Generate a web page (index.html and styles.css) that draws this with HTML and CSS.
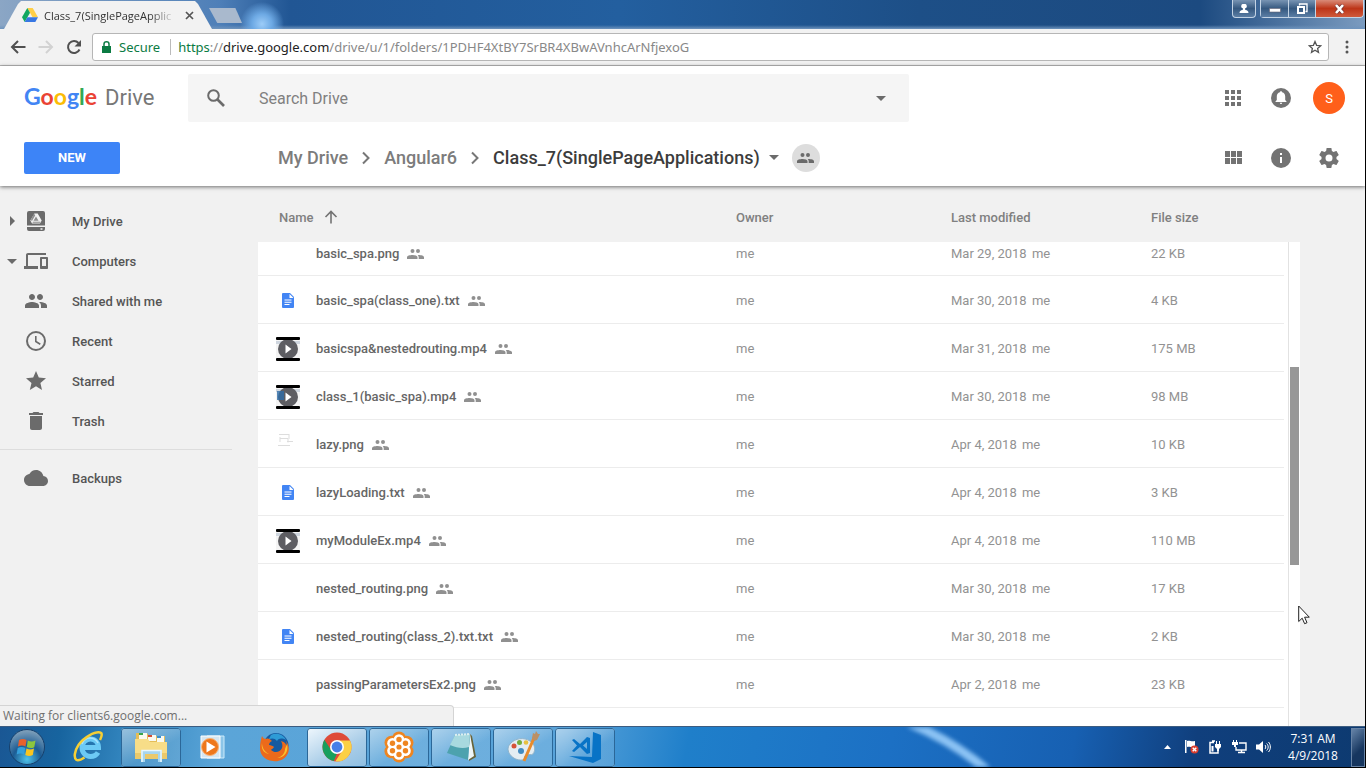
FILE: index.html
```html
<!DOCTYPE html>
<html lang="en">
<head>
<meta charset="utf-8">
<title>Class_7(SinglePageApplications) - Google Drive</title>
<link rel="stylesheet" href="styles.css">
</head>
<body>
<svg class="defs" aria-hidden="true">
  <symbol id="people" viewBox="0 0 24 24"><path d="M16 11c1.66 0 2.99-1.34 2.99-3S17.66 5 16 5s-3 1.34-3 3 1.34 3 3 3zm-8 0c1.66 0 2.99-1.34 2.99-3S9.66 5 8 5 5 6.34 5 8s1.34 3 3 3zm0 2c-2.33 0-7 1.17-7 3.5V19h14v-2.500c0-2.330-4.670-3.500-7-3.500zm8 0c-.29 0-.62.02-.97.05 1.160.840 1.970 1.970 1.970 3.450V19h6v-2.500c0-2.330-4.670-3.500-7-3.500z"/></symbol>
  <symbol id="people-small" viewBox="0 0 17 12"><path d="M5.500 1a2 2 0 1 1 0 4 2 2 0 0 1 0-4zM11 1a2 2 0 1 1 0 4 2 2 0 0 1 0-4zM0 11V9.300C0 7.700 3 7 5.500 7s5 .7 5 2.300V11zM11.700 11V9.300c0-.9-.4-1.600-1-2.200 2.600-.2 6.300.5 6.300 2.200V11z"/></symbol>
  <symbol id="doc" viewBox="0 0 12 15"><path fill="#4285f4" d="M1 0h7l4 4v10a1 1 0 0 1-1 1H1a1 1 0 0 1-1-1V1a1 1 0 0 1 1-1z"/><path fill="#fff" d="M7.500 1v4h4zM2.500 6.500h7v1h-7zM2.500 8.700h7v1h-7zM2.500 11h5v1h-5z"/></symbol>
  <symbol id="video" viewBox="0 0 24 24"><path fill="#f4f4f4" d="M0 0h24v24H0z"/><path fill="#cfd6df" d="M0 4h24v3H0z"/><circle cx="12" cy="12" r="10" fill="#5d5d62"/><rect width="24" height="3" rx="1"/><rect y="21" width="24" height="3" rx="1"/><path fill="#fff" d="M9.500 7.500v9l6-4.500z"/></symbol>
  <symbol id="crumb" viewBox="0 0 10 14"><path fill="none" stroke="#777" stroke-width="2" d="M2 1.500 7.500 7 2 12.500"/></symbol>
</svg>

<header class="titlebar">
  <div class="tab">
    <svg width="16" height="14" viewBox="0 0 16 14"><path fill="#ffcf48" d="M5.300 0h5.400L16 9.300h-5.400z"/><path fill="#11a861" d="M5.300 0 8 4.700 2.700 14 0 9.300z"/><path fill="#3777e3" d="M5.400 9.300H16L13.300 14H2.700z"/></svg>
    <span class="tab-title">Class_7(SinglePageApplic</span>
    <button class="tab-close" aria-label="Close tab"><svg width="9" height="9" viewBox="0 0 9 9"><path stroke="#555" stroke-width="1.700" d="m1 1 7 7M8 1 1 8"/></svg></button>
  </div>
  <button class="new-tab" aria-label="New tab"></button>
  <div class="window-controls">
    <button class="win-button profile" aria-label="Profile"><svg width="10" height="10" viewBox="0 0 10 10"><path fill="#fff" d="M5 0a2.300 2.300 0 0 1 1 4.500l.3 1.500C8.500 6.400 9.500 7 9.500 9h-9c0-2 1-2.600 3.200-3L4 4.500A2.300 2.300 0 0 1 5 0z"/></svg></button>
    <div class="win-group">
      <button class="win-button minimize" aria-label="Minimize"><svg width="12" height="5" viewBox="0 0 12 5"><path fill="#fff" stroke="#667" stroke-width=".6" d="M.5.500h11v3.500H.5z"/></svg></button>
      <button class="win-button restore" aria-label="Restore"><svg width="12" height="12" viewBox="0 0 12 12"><path fill="none" stroke="#fff" stroke-width="1.300" d="M3.500 2.500V1H11v7.500H9.500"/><path fill="none" stroke="#fff" stroke-width="2" d="M2 4h6v6H2z"/></svg></button>
      <button class="win-button close" aria-label="Close"><svg width="11" height="10" viewBox="0 0 11 10"><path stroke="#733" stroke-width="4" d="m2 1 7 8M9 1 2 9"/><path stroke="#fff" stroke-width="2.600" d="m2 1 7 8M9 1 2 9"/></svg></button>
    </div>
  </div>
</header>

<nav class="toolbar">
  <button class="nav-button" aria-label="Back"><svg width="16" height="14" viewBox="0 0 16 14"><path fill="none" stroke="#505050" stroke-width="2" d="M15.500 7H2M8 1 2 7l6 6"/></svg></button>
  <button class="nav-button" aria-label="Forward"><svg width="16" height="14" viewBox="0 0 16 14"><path fill="none" stroke="#d2d2d2" stroke-width="2" d="M.5 7H14M8 1l6 6-6 6"/></svg></button>
  <button class="nav-button" aria-label="Reload"><svg width="16" height="16" viewBox="0 0 16 16"><path fill="none" stroke="#505050" stroke-width="2" d="M13.500 10.500A6 6 0 1 1 12.500 4"/><path fill="#505050" d="M15 1v6.500H8.500z"/></svg></button>
  <div class="omnibox">
    <svg width="9" height="12" viewBox="0 0 9 12"><path fill="#0b7b43" d="M0 5h9v7H0z"/><path fill="none" stroke="#0b7b43" stroke-width="1.500" d="M2 5.500V3a2.500 2.200 0 0 1 5 0v2.500"/></svg>
    <span class="secure">Secure</span>
    <span class="url"><span class="scheme">https</span>://<span class="host">drive.google.com</span>/drive/u/1/folders/1PDHF4XtBY7SrBR4XBwAVnhcArNfjexoG</span>
    <button class="star" aria-label="Bookmark"><svg width="14" height="14" viewBox="0 0 14 14"><path fill="none" stroke="#555" stroke-width="1.300" d="m7 1.500 1.600 3.800 4.100.4-3.100 2.700.9 4L7 10.300 3.500 12.400l.9-4L1.300 5.700l4.100-.4z"/></svg></button>
  </div>
  <button class="menu" aria-label="Menu"><svg width="4" height="14" viewBox="0 0 4 14" fill="#555"><circle cx="2" cy="2" r="1.500"/><circle cx="2" cy="7" r="1.500"/><circle cx="2" cy="12" r="1.500"/></svg></button>
</nav>

<header class="drive-header">
  <div class="header-row">
    <a class="logo" href="#" aria-label="Google Drive"><span class="google"><span class="blue">G</span><span class="red">o</span><span class="yellow">o</span><span class="blue">g</span><span class="green">l</span><span class="red">e</span></span><span class="product">Drive</span></a>
    <form class="search">
      <svg width="18" height="18" viewBox="0 0 18 18"><circle cx="6.500" cy="6.500" r="5.300" fill="none" stroke="#6b6b6b" stroke-width="2"/><path stroke="#6b6b6b" stroke-width="2.600" d="m10.500 10.500 6.500 6.500"/></svg>
      <input type="text" placeholder="Search Drive" aria-label="Search Drive">
      <button type="button" class="caret-button" aria-label="Search options"><span class="caret"></span></button>
    </form>
    <div class="actions">
      <button aria-label="Google apps"><svg width="16" height="16" viewBox="0 0 16 16" fill="#737373"><path d="M0 0h4v4H0zM6 0h4v4H6zM12 0h4v4h-4zM0 6h4v4H0zM6 6h4v4H6zM12 6h4v4h-4zM0 12h4v4H0zM6 12h4v4H6zM12 12h4v4h-4z"/></svg></button>
      <button aria-label="Notifications"><svg width="20" height="20" viewBox="0 0 20 20"><circle cx="10" cy="10" r="10" fill="#737373"/><path fill="#fff" d="M10 3.200c.7 0 1.100.4 1.100 1.100 2 .5 3.100 2.100 3.100 4.200v3.600l1.300 1.300v.700h-11v-.7l1.300-1.300V8.500c0-2.100 1.100-3.700 3.100-4.200 0-.7.400-1.100 1.100-1.100zM8.800 14.800h2.400a1.200 1.200 0 0 1-2.400 0z"/></svg></button>
      <button class="avatar" aria-label="Account">S</button>
    </div>
  </div>
  <div class="header-row">
    <button class="new">NEW</button>
    <nav class="breadcrumbs">
      <a href="#">My Drive</a>
      <svg width="10" height="14"><use href="#crumb"/></svg>
      <a href="#">Angular6</a>
      <svg width="10" height="14"><use href="#crumb"/></svg>
      <a class="current" href="#">Class_7(SinglePageApplications)<span class="caret"></span></a>
      <button class="shared-badge" aria-label="Shared"><svg width="17" height="12" fill="#6b6b6b"><use href="#people-small"/></svg></button>
    </nav>
    <div class="actions">
      <button aria-label="Grid view"><svg width="17" height="13" viewBox="0 0 17 13" fill="#737373"><path d="M0 0h5v6H0zM6 0h5v6H6zM12 0h5v6h-5zM0 7h5v6H0zM6 7h5v6H6zM12 7h5v6h-5z"/></svg></button>
      <button aria-label="Details"><svg width="20" height="20" viewBox="0 0 20 20"><circle cx="10" cy="10" r="10" fill="#737373"/><path fill="#fff" d="M9 5h2v2H9zM9 9h2v6H9z"/></svg></button>
      <button aria-label="Settings"><svg width="24" height="24" viewBox="0 0 24 24" fill="#737373"><path d="M19.430 12.980c.04-.32.07-.64.07-.98s-.03-.66-.07-.98l2.110-1.650c.19-.15.24-.42.12-.64l-2-3.460c-.12-.22-.39-.3-.61-.22l-2.490 1c-.52-.4-1.080-.73-1.690-.98l-.38-2.650C14.460 2.180 14.250 2 14 2h-4c-.25 0-.46.18-.49.42l-.38 2.650c-.61.25-1.170.59-1.690.98l-2.490-1c-.23-.09-.49 0-.61.22l-2 3.460c-.13.22-.07.49.12.64l2.110 1.650c-.04.32-.07.65-.07.98s.03.66.07.98l-2.110 1.650c-.19.15-.24.42-.12.64l2 3.460c.12.22.39.3.61.22l2.490-1c.52.4 1.080.73 1.690.98l.38 2.650c.03.24.24.42.49.42h4c.25 0 .46-.18.49-.42l.38-2.650c.61-.25 1.170-.59 1.690-.98l2.490 1c.23.09.49 0 .61-.22l2-3.460c.12-.22.07-.49-.12-.64l-2.110-1.650zM12 15.500a3.500 3.500 0 1 1 0-7 3.500 3.500 0 0 1 0 7z"/></svg></button>
    </div>
  </div>
</header>

<main class="content">
  <nav class="sidebar">
    <a href="#"><span class="expander right"></span><svg width="24" height="24" viewBox="0 0 24 24"><path d="M5 2h14a2 2 0 0 1 2 2v12.500H3V4a2 2 0 0 1 2-2zM3 18h18v2a2 2 0 0 1-2 2H5a2 2 0 0 1-2-2z"/><path fill="#f1f1f1" d="M10.300 4.500h3.400l4 7-1.700 3H8l-1.700-3zM16.500 19.300h2v1.400h-2z"/><path d="m12 7.500-2.500 4.300h5zM10 4.500l1.200 2-3.400 5.800-.8-1.500zM9 12.800h7.500l-.6 1H8.500z" opacity=".75"/></svg>My Drive</a>
    <a href="#"><span class="expander down"></span><svg width="24" height="24" viewBox="0 0 24 24"><path d="M4 6h18V4H4c-1.100 0-2 .9-2 2v11H0v3h14v-3H4V6zm19 2h-6c-.55 0-1 .45-1 1v10c0 .55.45 1 1 1h6c.55 0 1-.45 1-1V9c0-.55-.45-1-1-1zm-1 9h-4v-7h4v7z"/></svg>Computers</a>
    <a href="#"><span class="expander"></span><svg width="24" height="24"><use href="#people"/></svg>Shared with me</a>
    <a href="#"><span class="expander"></span><svg width="24" height="24" viewBox="0 0 24 24"><circle cx="12" cy="12" r="9" fill="none" stroke="#6b6b6b" stroke-width="2"/><path fill="none" stroke="#6b6b6b" stroke-width="1.600" d="M11.800 7v5.500l4.500 2.700"/></svg>Recent</a>
    <a href="#"><span class="expander"></span><svg width="24" height="24" viewBox="0 0 24 24"><path d="m12 17.300 6 3.700-1.600-7L22 9.200l-7.200-.6L12 2 9.200 8.600 2 9.200 7.500 14 5.800 21z"/></svg>Starred</a>
    <a href="#"><span class="expander"></span><svg width="24" height="24" viewBox="0 0 24 24"><path d="M6 19c0 1.100.9 2 2 2h8c1.100 0 2-.9 2-2V7H6v12zM19 4h-3.500l-1-1h-5l-1 1H5v2h14V4z"/></svg>Trash</a>
    <hr>
    <a href="#"><span class="expander"></span><svg width="24" height="24" viewBox="0 0 24 24"><path d="M19.350 10.040C18.670 6.590 15.640 4 12 4 9.110 4 6.600 5.640 5.350 8.040 2.340 8.360 0 10.910 0 14c0 3.310 2.690 6 6 6h13c2.760 0 5-2.240 5-5 0-2.640-2.050-4.780-4.650-4.960z"/></svg>Backups</a>
  </nav>

  <section class="list">
    <table>
      <colgroup><col><col class="col-owner"><col class="col-modified"><col class="col-size"></colgroup>
      <thead>
        <tr><th class="name-head"><span>Name<svg width="14" height="14" viewBox="0 0 14 14"><path fill="none" stroke="#737373" stroke-width="1.600" d="M7 13.500V2M1.500 7 7 1.500 12.500 7"/></svg></span></th><th>Owner</th><th>Last modified</th><th>File size</th></tr>
      </thead>
      <tbody>
        <tr class="partial"><td><div class="file"><span class="thumb"></span>basic_spa.png<svg class="shared"><use href="#people-small"/></svg></div></td><td>me</td><td>Mar 29, 2018 <span class="by">me</span></td><td>22 KB</td></tr>
        <tr><td><div class="file"><span class="thumb"><svg width="12" height="15"><use href="#doc"/></svg></span>basic_spa(class_one).txt<svg class="shared"><use href="#people-small"/></svg></div></td><td>me</td><td>Mar 30, 2018 <span class="by">me</span></td><td>4 KB</td></tr>
        <tr><td><div class="file"><span class="thumb"><svg width="24" height="24"><use href="#video"/></svg></span>basicspa&amp;nestedrouting.mp4<svg class="shared"><use href="#people-small"/></svg></div></td><td>me</td><td>Mar 31, 2018 <span class="by">me</span></td><td>175 MB</td></tr>
        <tr><td><div class="file"><span class="thumb"><svg width="24" height="24"><use href="#video"/><path fill="#2f6da8" d="M1 6h7v9H1z" opacity=".8"/></svg></span>class_1(basic_spa).mp4<svg class="shared"><use href="#people-small"/></svg></div></td><td>me</td><td>Mar 30, 2018 <span class="by">me</span></td><td>98 MB</td></tr>
        <tr><td><div class="file"><span class="thumb"><svg width="24" height="24" viewBox="0 0 24 24"><path fill="none" stroke="#ddd" d="M3 1.500h10M4 4v5M4 5.500h8v4M13 1v5M2 12.500h12M11 8.500h6"/></svg></span>lazy.png<svg class="shared"><use href="#people-small"/></svg></div></td><td>me</td><td>Apr 4, 2018 <span class="by">me</span></td><td>10 KB</td></tr>
        <tr><td><div class="file"><span class="thumb"><svg width="12" height="15"><use href="#doc"/></svg></span>lazyLoading.txt<svg class="shared"><use href="#people-small"/></svg></div></td><td>me</td><td>Apr 4, 2018 <span class="by">me</span></td><td>3 KB</td></tr>
        <tr><td><div class="file"><span class="thumb"><svg width="24" height="24"><use href="#video"/></svg></span>myModuleEx.mp4<svg class="shared"><use href="#people-small"/></svg></div></td><td>me</td><td>Apr 4, 2018 <span class="by">me</span></td><td>110 MB</td></tr>
        <tr><td><div class="file"><span class="thumb"></span>nested_routing.png<svg class="shared"><use href="#people-small"/></svg></div></td><td>me</td><td>Mar 30, 2018 <span class="by">me</span></td><td>17 KB</td></tr>
        <tr><td><div class="file"><span class="thumb"><svg width="12" height="15"><use href="#doc"/></svg></span>nested_routing(class_2).txt.txt<svg class="shared"><use href="#people-small"/></svg></div></td><td>me</td><td>Mar 30, 2018 <span class="by">me</span></td><td>2 KB</td></tr>
        <tr><td><div class="file"><span class="thumb"></span>passingParametersEx2.png<svg class="shared"><use href="#people-small"/></svg></div></td><td>me</td><td>Apr 2, 2018 <span class="by">me</span></td><td>23 KB</td></tr>
      </tbody>
    </table>
  </section>
  <div class="scrollbar"><div class="scroll-thumb"></div></div>
  <div class="status">Waiting for clients6.google.com...</div>
</main>

<footer class="taskbar">
  <svg class="streak" width="120" height="40" viewBox="0 0 120 40"><path fill="none" stroke="#8cc3f4" stroke-width="9" d="M-10-14Q55 5 105 50"/></svg>
  <button class="start" aria-label="Start"><svg width="38" height="38" viewBox="0 0 38 38"><defs><radialGradient id="orb" cx=".5" cy=".85" r=".8"><stop offset="0" stop-color="#4fc3ea"/><stop offset=".5" stop-color="#1c5c94"/><stop offset="1" stop-color="#7a9cb8"/></radialGradient></defs><circle cx="19" cy="19" r="17.500" fill="url(#orb)" stroke="#16406c"/><path fill="#e8602c" d="M11 12c2.500-1.500 5-1.500 7.500 0l-1 6.500c-2.500-1.300-5-1.300-7.500 0z"/><path fill="#8cc63e" d="M19.800 12.500c2.500 1.300 5 1.300 7.700 0l-1.200 6.700c-2.500 1.300-5 1.200-7.500-.2z"/><path fill="#35a0dc" d="M9.700 20c2.500-1.500 5-1.300 7.500 0l-1.100 6.500c-2.500-1.400-5-1.400-7.400-.1z"/><path fill="#fbc51e" d="M18.500 20.500c2.500 1.300 5 1.300 7.500 0L24.800 27c-2.500 1.300-5 1.200-7.500 0z"/></svg></button>
  <button class="task" aria-label="Internet Explorer"><svg width="32" height="32" viewBox="0 0 32 32"><path fill="none" stroke="#6ccaf5" stroke-width="5" d="M9 16.500h16.500c0-5-3.500-8.500-8-8.500s-8.500 3.500-8.500 8.500 3.500 9 8.500 9c3.500 0 6-1.500 7.500-4"/><path fill="none" stroke="#a9e3fc" stroke-width="1.500" d="M9 13c1.500-4 4.500-6 8-6s6.500 2 8 5"/><path fill="none" stroke="#f6cf35" stroke-width="2.500" d="M27 9c2-4 2.500-7 0-7.500C22 .5 11 6 5.500 14 1.500 20 .5 27 3.500 29c2 1 5-.5 8-2.500"/></svg></button>
  <button class="task open" aria-label="File Explorer"><svg width="34" height="32" viewBox="0 0 34 32"><path fill="#e5bd58" d="M2 5V2h11l2 3h16v22H2z"/><path fill="#f9f9f0" d="M5 2h8v6H5zM14 4h8v6h-8zM23 5h7v6h-7z"/><path fill="#36a44a" d="M5 2h4v2H5z"/><path fill="#d24b35" d="M14 4h4v2h-4z"/><path fill="#3b8fd0" d="M23 5h4v2h-4z"/><path fill="#f7dd88" d="M1 8h13l2 3h17v17H1z"/><path fill="#eac96b" d="M1 22h32v6H1z"/><path fill="none" stroke="#a6d5ee" stroke-width="4" d="M9 31V21h17v10"/><path fill="none" stroke="#e9f7fd" stroke-width="1.500" d="M8 31V19.500h19V31"/></svg></button>
  <button class="task" aria-label="Media Player"><svg width="28" height="28" viewBox="0 0 28 28"><path fill="#8cc5e8" stroke="#ccebfa" d="M8 3h17v22H8z"/><path fill="#d5e6f1" stroke="#fff" d="M2 3h19v22H2z"/><circle cx="11" cy="14" r="8.500" fill="#ee771b" stroke="#f8b174"/><path fill="#fff" d="M7.500 8.500v11l9-5.500z"/></svg></button>
  <button class="task" aria-label="Firefox"><svg width="32" height="32" viewBox="0 0 32 32"><circle cx="17" cy="14.500" r="12.500" fill="#175aa0"/><path fill="#2e9bd6" d="M12 4c6-3 13 0 15 5-4-2-7-2-9 1-2-3-5-3-8-2z"/><path fill="#ec6a1b" d="M3 5c1 2 2 3 4 3 2-1 4 0 6 2-2 1-3 2-3 4 2 0 4 1 5 2-1 2-3 2-3 3 3 3 9 3 11-2 1-3 0-5-1-7 4 1 6 3 5 8 1-3 1-6 0-8 3 4 4 10 1 14-3 5-9 7-14 6C5 29 .5 23 1 16 1 12 2 8 3 5z"/><path fill="#fbc02b" d="M28 13c2 8-3 14-10 14 5-1 8-5 8-9zM3 12c0 5 3 9 7 11-6-1-8-6-7-11z"/></svg></button>
  <button class="task open active" aria-label="Chrome"><svg width="30" height="30" viewBox="0 0 30 30"><circle cx="15" cy="15" r="14.500" fill="#de4b39"/><path fill="#189f5d" d="M2.400 7.800 9.300 18.300l5.700 3.200-3.200 7.600A14.500 14.500 0 0 1 2.400 7.800z"/><path fill="#fbd045" d="M15 8.500h13a14.500 14.500 0 0 1-14.800 20.900L20.700 18z"/><circle cx="15" cy="15" r="7" fill="#fff"/><circle cx="15" cy="15" r="5.400" fill="#477fe8"/></svg></button>
  <button class="task open" aria-label="GoToMeeting"><svg width="32" height="32" viewBox="0 0 32 32"><g fill="#ee8520"><circle cx="16" cy="7.500" r="7"/><circle cx="23.500" cy="11.800" r="7"/><circle cx="23.500" cy="20.200" r="7"/><circle cx="16" cy="24.500" r="7"/><circle cx="8.500" cy="20.200" r="7"/><circle cx="8.500" cy="11.800" r="7"/></g><g fill="#fff"><circle cx="16" cy="8.500" r="5.300"/><circle cx="22.500" cy="12.200" r="5.300"/><circle cx="22.500" cy="19.800" r="5.300"/><circle cx="16" cy="23.500" r="5.300"/><circle cx="9.500" cy="19.800" r="5.300"/><circle cx="9.500" cy="12.200" r="5.300"/><circle cx="16" cy="16" r="5"/></g><g fill="#ee8520"><circle cx="16" cy="8.500" r="2.700"/><circle cx="22.500" cy="12.200" r="2.700"/><circle cx="22.500" cy="19.800" r="2.700"/><circle cx="16" cy="23.500" r="2.700"/><circle cx="9.500" cy="19.800" r="2.700"/><circle cx="9.500" cy="12.200" r="2.700"/><circle cx="16" cy="16" r="2.600"/></g></svg></button>
  <button class="task open" aria-label="Notepad"><svg width="32" height="30" viewBox="0 0 32 30"><path fill="#67633a" d="m25 2 2 2 4 21-7 4z"/><path fill="#eef5f7" d="m25 2 4 22-6 4z"/><path fill="#4da2ae" d="M10 3 25 2l-2 26L2 21z"/><path fill="#a8d9df" d="M10 3 25 2l-1 13c-6 2-12 1-19-2z"/><path stroke="#dceef0" stroke-width="2" stroke-dasharray="2 1" d="M10 3 25 2"/></svg></button>
  <button class="task open" aria-label="Paint"><svg width="34" height="32" viewBox="0 0 34 32"><path fill="#e4edf2" stroke="#8fb3ca" d="M4 13c5-6 14-7 20-3 5 3 6 9 3 13-2 2-5-1-7 1-3 2 0 5-4 5C7 30-2 20 4 13z"/><circle cx="8" cy="15" r="2.500" fill="#d65338"/><circle cx="13.500" cy="11.500" r="2.500" fill="#75ad3d"/><circle cx="20" cy="11.500" r="2.300" fill="#e8c141"/><circle cx="15" cy="20" r="3" fill="#428bc0"/><path stroke="#e88b2b" stroke-width="3" d="M28 7 18 30"/><path fill="#bc9064" d="m26 7 1-5 2 1 1-3 2 3 2 0-3 6-3 1z"/></svg></button>
  <button class="task open" aria-label="Visual Studio Code"><svg width="32" height="32" viewBox="0 0 32 32"><g fill="#0873c6"><path d="m24 1 8 3v24l-8 4L0 25l23 1z"/><path fill-rule="evenodd" d="m3 9 2-1 6 5 7-7 3 1v15l-3 1-7-7-6 5-2-1 5-5.500zm15 2-4 3.500 4 3.500z"/></g></svg></button>
  <div class="tray">
    <button aria-label="Show hidden icons"><svg width="7" height="4" viewBox="0 0 7 4"><path fill="#fff" d="M3.500 0 7 4H0z"/></svg></button>
    <button aria-label="Action Center"><svg width="15" height="14" viewBox="0 0 15 14"><path fill="#fff" d="M1 0h1.500v13H1zM3 1c3-1 4 1 8 0v6c-4 1-5-1-8 0z"/><circle cx="10.500" cy="9.500" r="4" fill="#d93d2e"/><path stroke="#fff" stroke-width="1.400" d="m8.700 7.700 3.600 3.600m0-3.600-3.600 3.600"/></svg></button>
    <button aria-label="Power"><svg width="14" height="14" viewBox="0 0 14 14"><path fill="none" stroke="#fff" stroke-width="1.500" d="M6 2.500H2v10.500h8v-3M4 1h3"/><path fill="#fff" d="M8 1h1v3H8zM11 1h1v3h-1zM7 4h6v3l-2 2v2H9V9L7 7zM3.500 6h2v5.500h-2z"/></svg></button>
    <button aria-label="Network"><svg width="15" height="14" viewBox="0 0 15 14"><path fill="none" stroke="#fff" stroke-width="1.400" d="M7 3h7v7H4V7M6 12.500h7M9.500 10v2"/><path fill="#fff" d="M1 0h1v2H1zM4 0h1v2H4zM0 2h6v3H4v2H2V5H0z"/></svg></button>
    <button aria-label="Volume"><svg width="15" height="14" viewBox="0 0 15 14"><path fill="#fff" d="M0 4.500h3L7 1v12L3 9.500H0z"/><path fill="none" stroke="#fff" d="M9 5c1 1 1 3 0 4M10.700 3.500c2 2 2 5 0 7M12.500 2c2.500 3 2.500 7 0 10"/></svg></button>
    <div class="clock"><span>7:31 AM</span><span>4/9/2018</span></div>
    <button class="show-desktop" aria-label="Show desktop"></button>
  </div>
</footer>
<svg class="cursor" width="12" height="20" viewBox="0 0 12 20"><path fill="#fff" stroke="#222" d="M.7 1v15.500l3.500-3.300 2.400 5.500 2.400-1-2.400-5.500h4.700z"/></svg>
</body>
</html>
```
FILE: styles.css
```css
* { box-sizing: border-box; }

body {
  margin: 0;
  height: 100vh;
  display: flex;
  flex-direction: column;
  overflow: hidden;
  position: relative;
  border: 0 solid #000;
  border-width: 0 1px 1px 0;
  background: #f1f1f1;
  font-family: Roboto, sans-serif;
  font-size: 13px;
  color: #555;
}

button {
  margin: 0;
  padding: 0;
  border: 0;
  background: none;
  font: inherit;
  display: flex;
  align-items: center;
  justify-content: center;
}

a { color: inherit; text-decoration: none; }
svg { display: block; flex: none; }
.defs { position: absolute; width: 0; height: 0; }

/* Browser window */
.titlebar {
  display: flex;
  align-items: flex-start;
  flex: none;
  height: 29px;
  padding: 0 1px 0 4px;
  background:
    radial-gradient(circle at 262px 24px, #9cccf8 0, #6da9e4 10px, transparent 22px),
    linear-gradient(transparent 25px, #6f94bd 29px),
    linear-gradient(90deg, #8ba6c5 0, #4e7fb8 220px, #215694 290px, #235f9f 620px, #1d4f87 920px, #1c4a80 1200px, #7c9cc0 1366px);
}

.tab {
  display: flex;
  align-items: center;
  width: 208px;
  height: 28px;
  margin-top: 1px;
  padding: 0 14px 0 18px;
  background: #f2f2f2;
  clip-path: polygon(0 100%, 14px 3px, 17px 0, 191px 0, 194px 3px, 100% 100%);
}

.tab-title {
  flex: 1;
  margin-left: 6px;
  white-space: nowrap;
  font: 11px "Open Sans", sans-serif;
  color: #333;
  -webkit-mask-image: linear-gradient(90deg, #000 80%, transparent);
  mask-image: linear-gradient(90deg, #000 80%, transparent);
}

.tab-close { width: 18px; height: 18px; margin-left: 4px; }

.new-tab {
  width: 33px;
  height: 15px;
  margin-top: 8px;
  margin-left: -3px;
  background: #a9b9cd;
  clip-path: polygon(0 0, 80% 0, 100% 100%, 25% 100%);
}

.window-controls { display: flex; gap: 4px; margin-left: auto; }

.win-button {
  height: 18px;
  border: 1px solid #c3d3e4;
  border-top: 0;
  background: linear-gradient(#7894b3, #35587f 50%, #5b7ea5);
}

.profile { width: 24px; border-radius: 0 0 4px 4px; }
.win-group { display: flex; border-radius: 0 0 4px 4px; overflow: hidden; }
.minimize { width: 29px; }
.minimize svg { margin-top: 3px; }
.restore { width: 27px; border-left: 0; }
.close { width: 48px; border-left: 0; border-radius: 0 0 4px 0; background: linear-gradient(#d98b78, #bd3518 50%, #cf5a3c); }

.toolbar {
  display: flex;
  align-items: center;
  flex: none;
  height: 37px;
  padding-left: 4px;
  background: #f2f2f2;
  border-bottom: 1px solid #b9b9b9;
}

.nav-button { width: 28px; height: 28px; }

.omnibox {
  flex: 1;
  display: flex;
  align-items: center;
  height: 28px;
  margin-left: 4px;
  padding: 0 6px 0 9px;
  border: 1px solid #b6b6b6;
  border-radius: 3px;
  background: #fff;
  font: 13px "Noto Sans", sans-serif;
}

.secure { margin-left: 8px; padding-right: 10px; border-right: 1px solid #bbb; line-height: 16px; color: #0b7b43; }
.url { margin-left: 7px; color: #888; }
.scheme { color: #0b7b43; }
.host { color: #222; }
.star { margin-left: auto; }
.menu { width: 36px; height: 28px; }

/* Drive header */
.drive-header {
  flex: none;
  position: relative;
  z-index: 1;
  padding-bottom: 1px;
  background: #fff;
  box-shadow: 0 1px 4px rgba(0, 0, 0, .55);
}

.header-row {
  display: flex;
  align-items: center;
  height: 64px;
  padding: 0 12px 0 24px;
}

.header-row + .header-row { height: 55px; }

.logo { display: flex; align-items: baseline; width: 164px; padding-bottom: 4px; font-size: 22px; color: #777; }
.google { font-family: Lato, sans-serif; font-weight: 700; font-size: 23px; }
.product { margin-left: 8px; }
.blue { color: #4285f4; }
.red { color: #ea4335; }
.yellow { color: #fbbc05; }
.green { color: #34a853; }

.search {
  flex: 1;
  max-width: 721px;
  height: 48px;
  display: flex;
  align-items: center;
  padding-left: 19px;
  border-radius: 2px;
  background: #f5f5f5;
}

.search input {
  flex: 1;
  min-width: 0;
  margin-left: 34px;
  padding: 0;
  border: 0;
  outline: 0;
  background: none;
  font: 16px Roboto, sans-serif;
}

.search input::placeholder { color: #808080; opacity: 1; }
.caret-button { width: 56px; height: 48px; }
.caret { width: 0; border: 5px solid transparent; border-top-color: #6b6b6b; border-bottom: 0; }

.actions { display: flex; align-items: center; margin-left: auto; }
.actions button { width: 48px; height: 32px; }
.actions .avatar { width: 32px; margin: 0 8px; border-radius: 50%; background: #ff5f1a; color: #fff; font-size: 13px; }

.new {
  width: 96px;
  height: 32px;
  border-radius: 2px;
  background: #3d84f7;
  color: #fff;
  font-weight: 700;
}

.breadcrumbs {
  display: flex;
  align-items: center;
  gap: 13px;
  margin-left: 158px;
  font-weight: 500;
  font-size: 18px;
  color: #7c7c7c;
}

.current { display: flex; align-items: center; gap: 9px; color: #3c3c3c; }
.shared-badge { width: 28px; height: 28px; border-radius: 50%; background: #ddd; }

/* Content */
.content { flex: 1; min-height: 0; display: flex; position: relative; padding-right: 65px; }

.sidebar { width: 258px; flex: none; padding-top: 15px; font-weight: 500; color: #555; }
.sidebar a { display: flex; align-items: center; height: 40px; }
.sidebar svg { margin-right: 24px; fill: #6b6b6b; }
.sidebar hr { margin: 8px 26px 8px 0; border: 0; border-top: 1px solid #ddd; }
.expander { width: 24px; display: flex; justify-content: center; }
.expander::before { content: ""; border: 0 solid transparent; }
.right::before { border-width: 5px 0 5px 5px; border-left-color: #6b6b6b; }
.down::before { border-width: 5px 5px 0; border-top-color: #6b6b6b; }

.list {
  flex: 1;
  min-width: 0;
  overflow: hidden;
  padding-right: 4px;
  background: linear-gradient(#f1f1f1 56px, #fff 56px);
}

table { width: 100%; table-layout: fixed; border-collapse: separate; border-spacing: 0; }
.col-owner { width: 215px; }
.col-modified { width: 200px; }
.col-size { width: 133px; }
th, td { padding: 0; text-align: left; }
th { height: 56px; padding-top: 6px; font-weight: 500; color: #808080; }
.name-head { padding-left: 21px; }
.name-head span { display: flex; align-items: center; gap: 10px; }
td { height: 48px; padding-top: 2px; border-bottom: 1px solid #ececec; color: #929292; }
.partial td { height: 34px; padding-bottom: 12px; }
.by { margin-left: 2px; }
.file { display: flex; align-items: center; height: 24px; padding-left: 18px; font-weight: 500; color: #666; }
.partial .file { height: 16px; }
.thumb { width: 24px; margin-right: 16px; display: flex; justify-content: center; }
.shared { width: 17px; height: 12px; margin-left: 8px; fill: #909090; }

.scrollbar { width: 12px; margin-top: 56px; padding: 125px 1px 0; border-left: 1px solid #e2e2e2; background: #fff; }
.scroll-thumb { height: 198px; background: #979797; }

.status {
  position: absolute;
  left: 0;
  bottom: 0;
  width: 454px;
  height: 21px;
  padding-left: 3px;
  border: 1px solid #d4d4d4;
  border-width: 1px 1px 0 0;
  border-radius: 0 4px 0 0;
  background: #f1f1f1;
  font: 12px/20px "Open Sans", sans-serif;
  color: #6f6f6f;
}

/* Taskbar */
.taskbar {
  flex: none;
  display: flex;
  align-items: center;
  gap: 2px;
  height: 41px;
  border-top: 1px solid #3c5c80;
  background: linear-gradient(100deg, #1a5794 0, #17649f 60px, #3487c0 130px, #5ba5d8 220px, #58a3da 560px, #1f7fca 680px, #1c70c4 880px, #1760b2 1060px, #103f7d 1180px, #0d3a70 100%);
  position: relative;
  overflow: hidden;
}

.streak { position: absolute; left: 890px; top: 0; filter: blur(2px); }

.start { width: 53px; height: 40px; margin-right: 4px; }
.task { width: 60px; height: 39px; }

.open {
  border: 1px solid #b5d8f0;
  border-radius: 3px;
  outline: 1px solid #2b6798;
  outline-offset: -1px;
  background: linear-gradient(150deg, rgba(255, 255, 255, .5), rgba(255, 255, 255, .12) 60%);
}

.active { background: linear-gradient(150deg, #edf6fc, #a9cde8 60%, #8fbfe2); }

.tray { position: relative; display: flex; align-items: center; margin-left: auto; }
.tray button { width: 24px; height: 24px; }
.clock {
  width: 76px;
  display: flex;
  flex-direction: column;
  align-items: center;
  font: 12px/17px "Open Sans", sans-serif;
  color: #fff;
}
.tray .show-desktop { width: 14px; height: 39px; border: 1px solid #6783a5; background: linear-gradient(135deg, #6684a8, #16365f 60%); }

.cursor { position: absolute; left: 1298px; top: 605px; }
```
